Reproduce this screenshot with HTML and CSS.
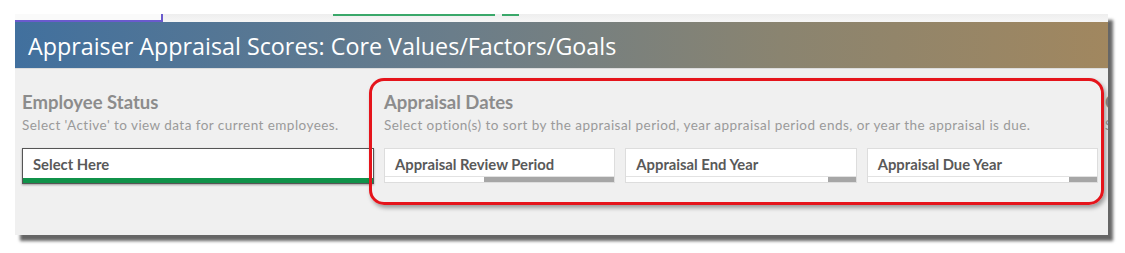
FILE: index.html
```html
<!DOCTYPE html>
<html lang="en">
<head>
    <meta charset="UTF-8">
    <title>Appraiser Appraisal Scores</title>
    <link rel="stylesheet" href="styles.css">
</head>
<body>
    <div class="frame">
        <div class="strip">
            <span class="tab-line"></span>
            <span class="green-line g1"></span>
            <span class="green-line g2"></span>
        </div>
        <div class="header">Appraiser Appraisal Scores: Core Values/Factors/Goals</div>
        <div class="content">
            <div class="col col-status">
                <h2>Employee Status</h2>
                <p>Select 'Active' to view data for current employees.</p>
                <div class="select select-green">Select Here</div>
            </div>
            <div class="col col-dates">
                <h2>Appraisal Dates</h2>
                <p>Select option(s) to sort by the appraisal period, year appraisal period ends, or year the appraisal is due.</p>
                <div class="boxes">
                    <div class="select">Appraisal Review Period<span class="bar" style="width: 57%"></span></div>
                    <div class="select">Appraisal End Year<span class="bar" style="width: 12%"></span></div>
                    <div class="select">Appraisal Due Year<span class="bar" style="width: 12%"></span></div>
                </div>
            </div>
            <div class="col col-next">
                <h2>C</h2>
                <p>S</p>
            </div>
            <div class="highlight"></div>
        </div>
    </div>
</body>
</html>
```

FILE: styles.css
```css
body {
    margin: 0;
    background: #fff;
    font-family: Lato, "Open Sans", sans-serif;
}
.frame {
    width: 1093px;
    height: 221px;
    margin: 14px 0 18px 15px;
    background: #f0f0f0;
    box-shadow: 5px 6px 3px rgba(0, 0, 0, 0.6);
    overflow: hidden;
    display: flex;
    flex-direction: column;
}
.strip {
    height: 8px;
    background: linear-gradient(to bottom, #eeeeee, #f6f6f6);
    position: relative;
    flex-shrink: 0;
}
.tab-line {
    position: absolute;
    left: 0;
    top: 0;
    width: 146px;
    height: 6px;
    border-right: 2px solid #6a5acd;
    border-bottom: 2px solid #6a5acd;
    background: #fafafa;
}
.green-line {
    position: absolute;
    top: 0;
    height: 2px;
    background: #3aa86a;
}
.g1 { left: 318px; width: 162px; }
.g2 { left: 487px; width: 17px; }
.header {
    height: 47px;
    flex-shrink: 0;
    box-sizing: border-box;
    padding: 9px 0 0 13px;
    color: #fff;
    font-family: "Open Sans", sans-serif;
    font-size: 23.3px;
    line-height: 30px;
    background: linear-gradient(to right, #41709e 0%, #6a7d8a 40%, #8a8470 70%, #a1875f 100%);
    border-bottom: 1px solid #dcdcdc;
}
.content {
    position: relative;
    display: flex;
    gap: 10px;
    padding: 23px 0 0 7px;
}
.col h2 {
    margin: 0;
    font-size: 18.5px;
    line-height: 20px;
    font-weight: bold;
    color: #8c8c8c;
    white-space: nowrap;
}
.col p {
    margin: 5px 0 0;
    font-size: 13.5px;
    line-height: 17px;
    letter-spacing: 0.45px;
    color: #9a9a9a;
    white-space: nowrap;
}
.col-status {
    width: 352px;
    flex-shrink: 0;
}
.col-dates {
    width: 714px;
    flex-shrink: 0;
}
.col-next {
    flex-shrink: 0;
    margin-left: -3px;
}
.select {
    position: relative;
    height: 35px;
    margin-top: 14px;
    box-sizing: border-box;
    padding: 6px 0 0 10px;
    background: #fff;
    border: 1px solid #dddddd;
    font-size: 14.8px;
    font-weight: bold;
    color: #595959;
    white-space: nowrap;
}
.select-green {
    height: 36px;
    border: 1px solid #555;
    box-shadow: 0 1px 2px rgba(0, 0, 0, 0.35);
}
.select-green::after {
    content: "";
    position: absolute;
    left: 0;
    right: 0;
    bottom: 0;
    height: 5px;
    background: #10924a;
}
.boxes {
    display: flex;
    gap: 10px;
}
.boxes .select {
    flex: 1;
}
.bar {
    position: absolute;
    right: 0;
    bottom: 0;
    height: 5px;
    background: #a6a6a6;
}
.boxes .select::before {
    content: "";
    position: absolute;
    left: 0;
    right: 0;
    bottom: 5px;
    border-bottom: 1px solid #e2e2e2;
}
.highlight {
    position: absolute;
    left: 354px;
    top: 9px;
    width: 729px;
    height: 121px;
    border: 3px solid #e5141b;
    border-radius: 15px;
    box-shadow: 2px 3px 4px rgba(0, 0, 0, 0.35);
    pointer-events: none;
}
```
